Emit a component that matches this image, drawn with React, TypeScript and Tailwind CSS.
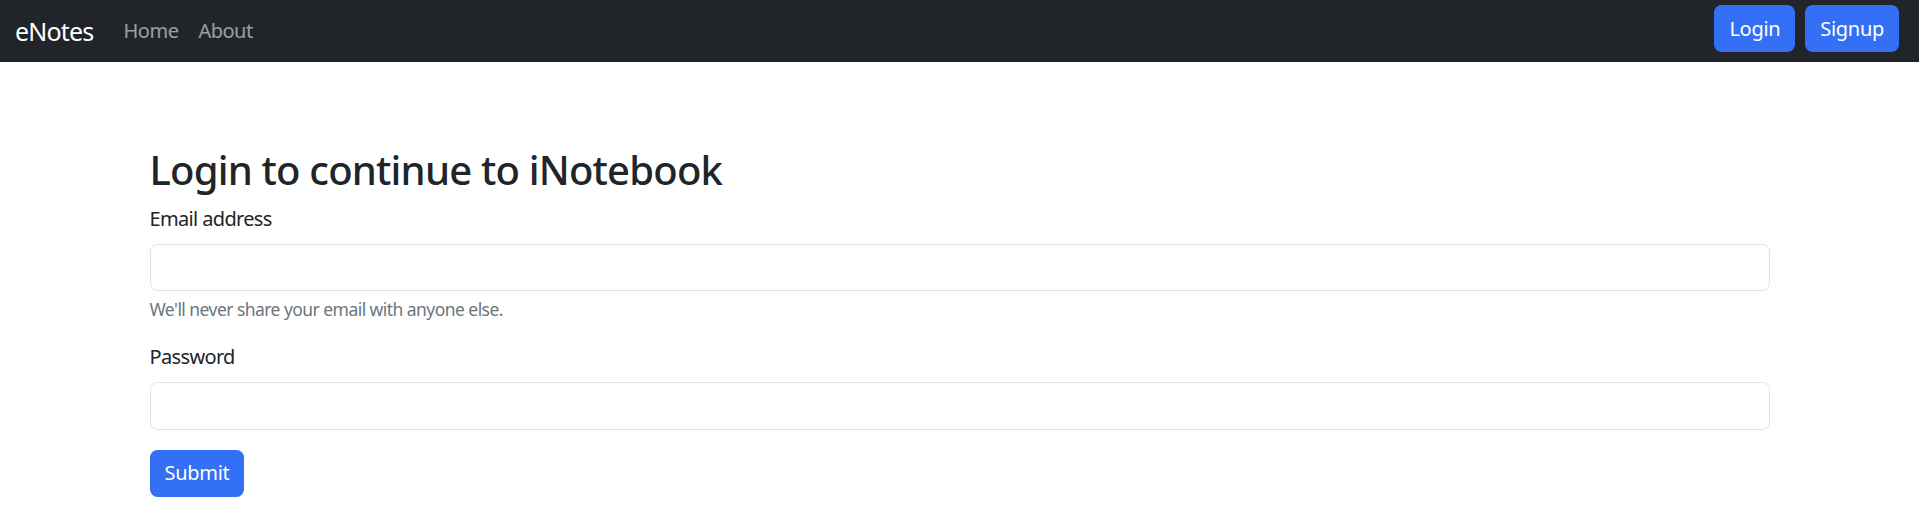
export default function App() {
  return (
    <div className="min-h-[519px] bg-white text-[#212529] font-['Noto_Sans',sans-serif]">
      <nav className="bg-[#212529] h-[62px] px-[15px] flex items-center justify-between">
        <div className="flex items-center">
          <a href="#" className="text-white text-[25px] leading-[37px] mr-[20px] tracking-[-0.8px]">
            eNotes
          </a>
          <ul className="flex">
            <li>
              <a href="#" className="px-[10px] text-[20px] text-white/55 tracking-[-0.5px]">Home</a>
            </li>
            <li>
              <a href="#" className="px-[10px] text-[20px] text-white/55 tracking-[-0.5px]">About</a>
            </li>
          </ul>
        </div>
        <div className="flex self-start pt-[5px]">
          <button className="mx-[5px] h-[47px] px-[15px] rounded-[7.5px] bg-[#3370f5] text-white text-[20px] tracking-[-0.3px]">
            Login
          </button>
          <button className="mx-[5px] h-[47px] px-[15px] rounded-[7.5px] bg-[#3370f5] text-white text-[20px] tracking-[-0.3px]">
            Signup
          </button>
        </div>
      </nav>

      <div className="w-[1650px] mx-auto px-[15px] pt-[83.5px]">
        <h2 className="text-[40px] leading-[48px] font-medium mb-[10px] tracking-[-0.8px]">
          Login to continue to iNotebook
        </h2>
        <form onSubmit={(e) => e.preventDefault()}>
          <div className="mb-[20px]">
            <label className="block text-[20px] leading-[30px] mb-[10px] tracking-[-0.65px]">Email address</label>
            <input
              type="email"
              className="block w-full h-[47.5px] border border-[#dee2e6] rounded-[7.5px] px-[15px] text-[20px] outline-none"
            />
            <div className="mt-[5px] text-[17.5px] leading-[26px] text-[#6c757d] tracking-[-0.55px]">
              We'll never share your email with anyone else.
            </div>
          </div>
          <div className="mb-[20px]">
            <label className="block text-[20px] leading-[30px] mb-[10px] tracking-[-0.65px]">Password</label>
            <input
              type="password"
              className="block w-full h-[47.5px] border border-[#dee2e6] rounded-[7.5px] px-[15px] text-[20px] outline-none"
            />
          </div>
          <button
            type="submit"
            className="h-[47.5px] px-[15px] rounded-[7.5px] bg-[#3370f5] text-white text-[20px] tracking-[-0.3px]"
          >
            Submit
          </button>
        </form>
      </div>
    </div>
  )
}
